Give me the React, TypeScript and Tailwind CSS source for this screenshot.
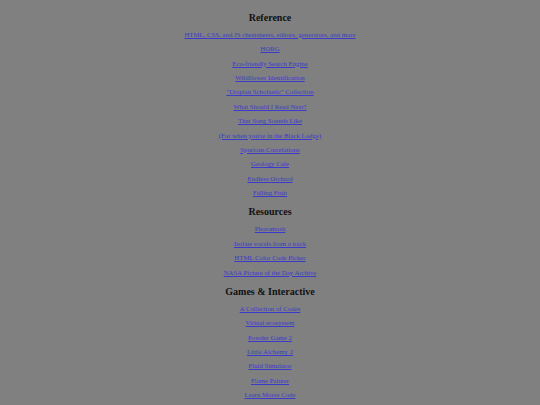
import React from 'react';

const sections: { title: string; links: string[] }[] = [
    {
        title: 'Reference',
        links: [
            'HTML, CSS, and JS cheatsheets, editors, generators, and more',
            'HORG',
            'Eco-friendly Search Engine',
            'Wildflower Identification',
            '"Utopian Scholastic" Collection',
            'What Should I Read Next?',
            'That Song Sounds Like',
            "(For when you're in the Black Lodge)",
            'Spurious Correlations',
            'Geology Cafe',
            'Endless Orchard',
            'Falling Fruit',
        ],
    },
    {
        title: 'Resources',
        links: ['Photomosh', 'Isolate vocals from a track', 'HTML Color Code Picker', 'NASA Picture of the Day Archive'],
    },
    {
        title: 'Games & Interactive',
        links: [
            'A Collection of Codes',
            'Virtual ecosystem',
            'Powder Game 2',
            'Little Alchemy 2',
            'Fluid Simulator',
            'Flame Painter',
            'Learn Morse Code',
        ],
    },
];

export default function App() {
    return (
        <div className="min-h-[405px] bg-[#808080] font-['Liberation_Serif',serif] text-center pt-[10.5px] overflow-hidden">
            {sections.map((s) => (
                <div key={s.title} className="mb-[8px]">
                    <h2 className="text-[10px] font-bold text-[#111] leading-[14px] mb-[5.3px]">{s.title}</h2>
                    <div className="flex flex-col items-center gap-[5.4px]">
                        {s.links.map((l) => (
                            <a key={l} href="#" className="text-[6.8px] leading-[9px] text-[#3a3acc] underline">
                                {l}
                            </a>
                        ))}
                    </div>
                </div>
            ))}
        </div>
    );
}
